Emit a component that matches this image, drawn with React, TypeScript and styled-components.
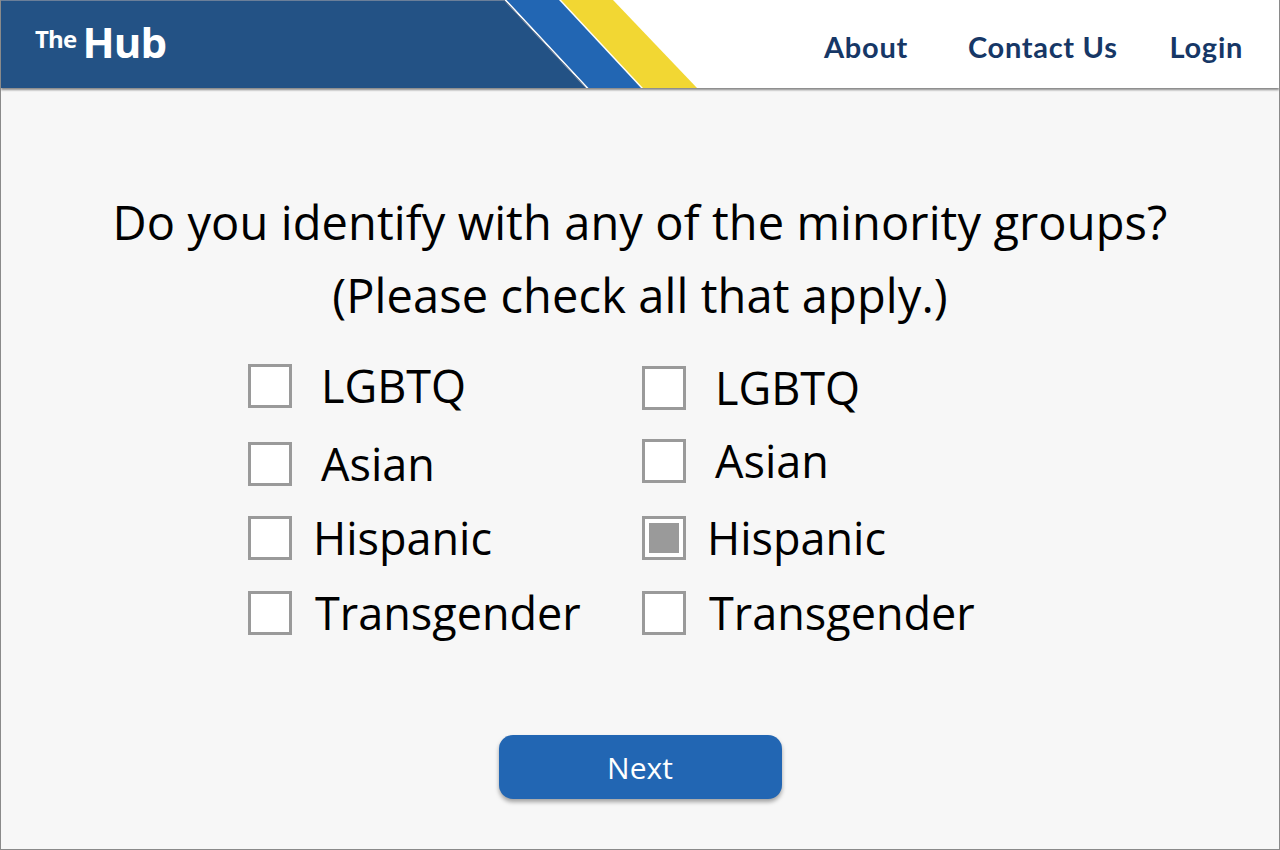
import React from "react";
import styled, { createGlobalStyle } from "styled-components";

const GlobalStyle = createGlobalStyle`
  html, body {
    margin: 0;
    padding: 0;
    background: #f7f7f7;
  }
  * {
    box-sizing: border-box;
  }
`;

const Page = styled.div`
  width: 1280px;
  height: 850px;
  display: flex;
  flex-direction: column;
  background: #f7f7f7;
  border: 1px solid #8a8a8a;
  border-top: none;
  font-family: "Open Sans", "Liberation Sans", sans-serif;
  overflow: hidden;
`;

const Header = styled.header`
  display: flex;
  flex-direction: row;
  align-items: stretch;
  height: 88px;
  background: #fff;
  box-shadow: 0 2px 2px rgba(0, 0, 0, 0.45);
  position: relative;
  z-index: 1;
`;

const Brand = styled.div`
  width: 503px;
  background: #235285;
  border-top: 1px solid #6b7f99;
  display: flex;
  align-items: flex-start;
  padding: 20px 0 0 34px;
  color: #fff;
  font-weight: 700;
`;

const BrandSmall = styled.span`
  font-size: 24px;
  line-height: 1;
  margin-top: 6px;
  margin-right: 6px;
  letter-spacing: -0.8px;
`;

const BrandBig = styled.span`
  font-size: 42px;
  line-height: 1;
  letter-spacing: -0.8px;
`;

const Stripes = styled.svg`
  display: block;
  flex: none;
`;

const Nav = styled.nav`
  flex: 1;
  display: flex;
  justify-content: flex-end;
  align-items: center;
  padding: 4px 36px 0 0;
`;

const NavLink = styled.a<{ $gap: number }>`
  margin-left: ${(p) => p.$gap}px;
  font-family: "Lato", "Open Sans", sans-serif;
  font-weight: 700;
  font-size: 29px;
  color: #163766;
  text-decoration: none;
  letter-spacing: 0.7px;
`;

const Main = styled.main`
  flex: 1;
  display: flex;
  flex-direction: column;
  align-items: center;
  padding-top: 98px;
`;

const Question = styled.h1`
  margin: 0;
  font-weight: 400;
  font-size: 47px;
  line-height: 73px;
  color: #000;
  text-align: center;
  letter-spacing: 0.1px;
  white-space: nowrap;
`;

const Options = styled.div`
  align-self: flex-start;
  margin: 19px 0 0 247px;
  display: grid;
  grid-template-columns: 394px 360px;
  grid-auto-rows: 75px;
`;

const Option = styled.label<{ $shift: number; $lift: number }>`
  display: flex;
  align-items: center;
  gap: ${(p) => 29 + p.$shift}px;
  font-size: 45px;
  color: #000;
  transform: translateY(${(p) => p.$lift}px);
`;

const Box = styled.span<{ $checked?: boolean }>`
  width: 44px;
  height: 44px;
  flex: none;
  border: 3px solid #9a9a9a;
  background: #fff;
  display: flex;
  align-items: center;
  justify-content: center;
  &::after {
    content: "";
    width: 30px;
    height: 30px;
    background: ${(p) => (p.$checked ? "#9a9a9a" : "transparent")};
  }
`;

const NextButton = styled.button`
  margin-top: 84px;
  width: 283px;
  height: 64px;
  border: none;
  border-radius: 14px;
  background: #2266b3;
  color: #fff;
  font-family: "Open Sans", "Liberation Sans", sans-serif;
  font-size: 30px;
  box-shadow: 0 3px 4px rgba(0, 0, 0, 0.35);
  cursor: pointer;
`;

type Item = { label: string; checked?: boolean; shift: number; lift: number };

const items: Item[] = [
  { label: "LGBTQ", shift: 0, lift: -3 },
  { label: "LGBTQ", shift: 0, lift: -1 },
  { label: "Asian", shift: 0, lift: 0 },
  { label: "Asian", shift: 0, lift: -3 },
  { label: "Hispanic", shift: -8, lift: -1 },
  { label: "Hispanic", checked: true, shift: -8, lift: -1 },
  { label: "Transgender", shift: -6, lift: -1 },
  { label: "Transgender", shift: -6, lift: -1 },
];

export default function App() {
  return (
    <>
      <GlobalStyle />
      <Page>
        <Header>
          <Brand>
            <BrandSmall>The</BrandSmall>
            <BrandBig>Hub</BrandBig>
          </Brand>
          <Stripes width="193" height="88" viewBox="0 0 193 88">
            <polygon points="0,0 82,88 0,88" fill="#235285" />
            <polygon points="0,0 82,88" fill="none" stroke="#6b7f99" strokeWidth="1" />
            <polygon points="2.5,0 55,0 137,88 84.5,88" fill="#2266b3" />
            <polygon points="57,0 109,0 193,88 139,88" fill="#f2d733" />
          </Stripes>
          <Nav>
            <NavLink href="#" $gap={0}>About</NavLink>
            <NavLink href="#" $gap={60}>Contact Us</NavLink>
            <NavLink href="#" $gap={52}>Login</NavLink>
          </Nav>
        </Header>
        <Main>
          <Question>
            Do you identify with any of the minority groups?
            <br />
            (Please check all that apply.)
          </Question>
          <Options>
            {items.map((it, i) => (
              <Option key={i} $shift={it.shift} $lift={it.lift}>
                <Box $checked={it.checked} />
                {it.label}
              </Option>
            ))}
          </Options>
          <NextButton>Next</NextButton>
        </Main>
      </Page>
    </>
  );
}
